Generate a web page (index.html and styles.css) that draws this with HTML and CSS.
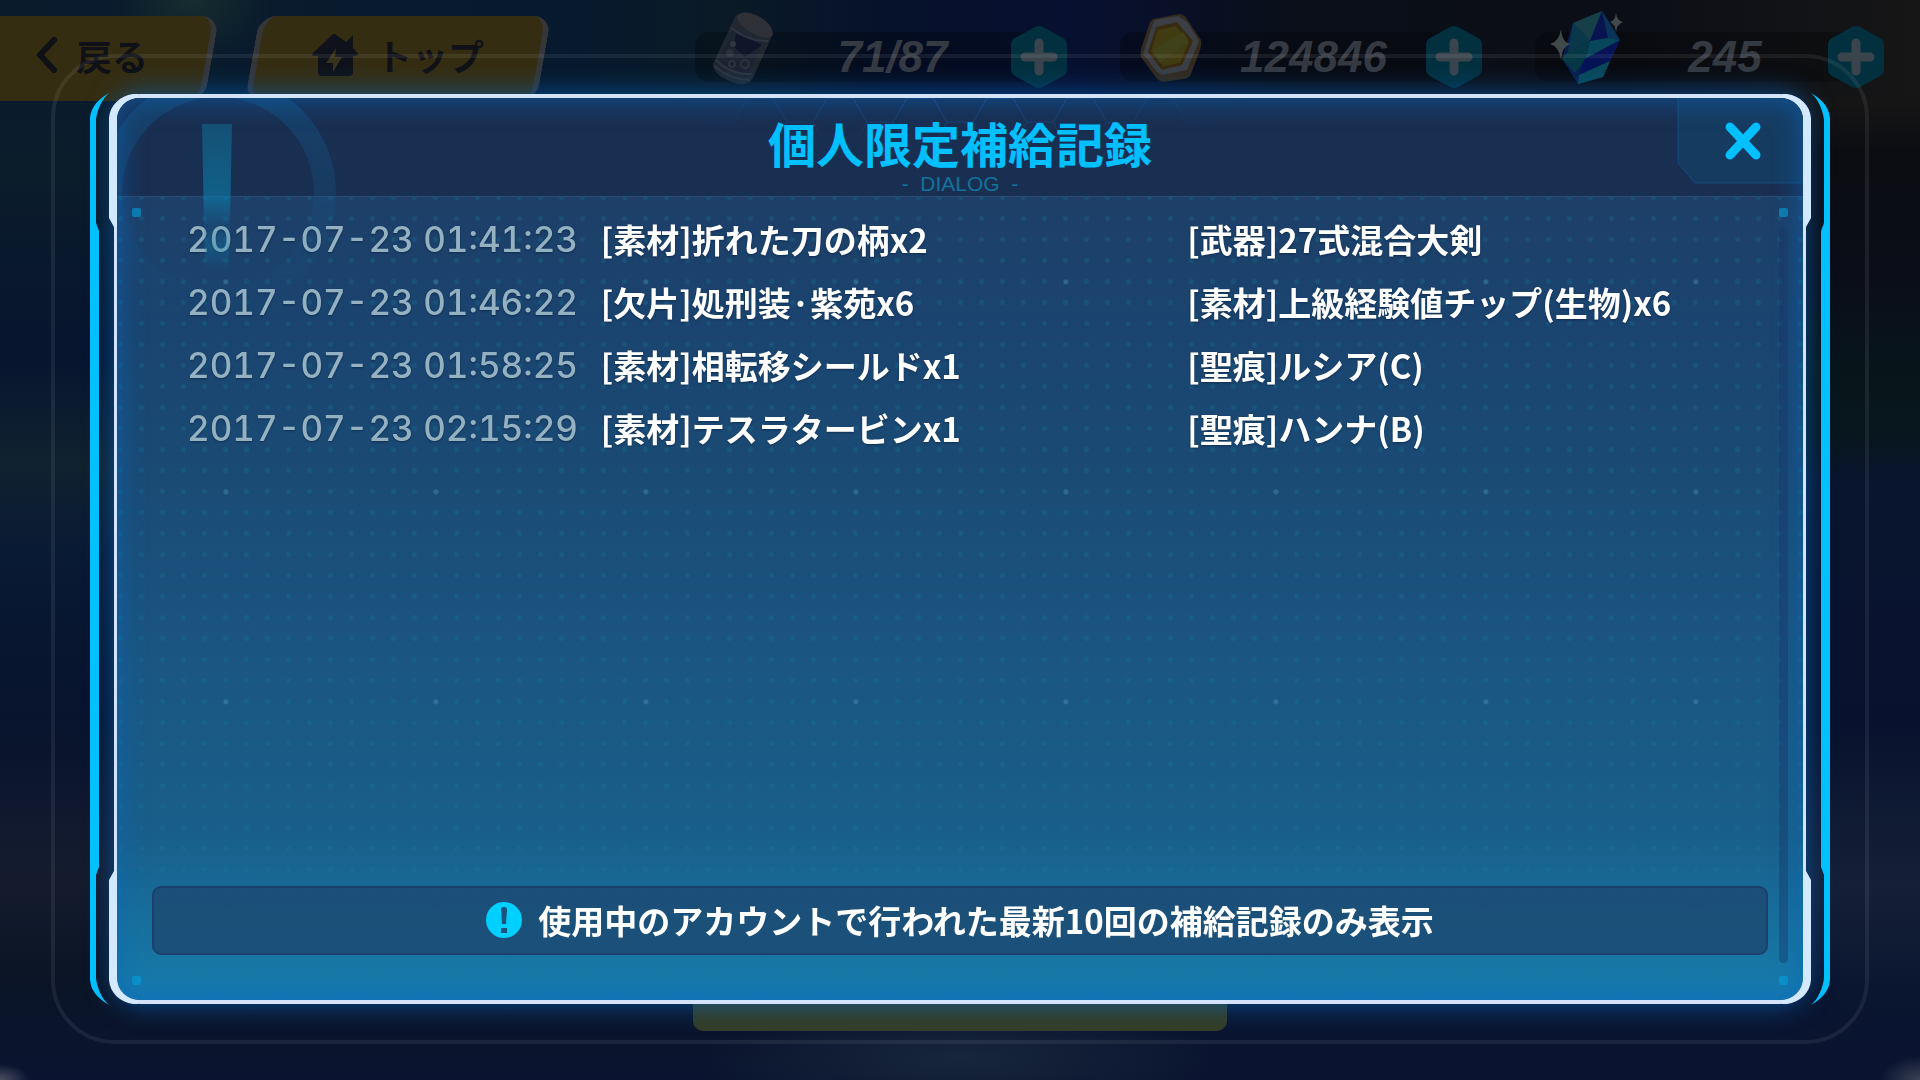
FILE: index.html
```html
<!DOCTYPE html>
<html lang="ja">
<head>
    <title>個人限定補給記録</title>
    <meta charset="UTF-8">
    <meta name="viewport" content="width=device-width, initial-scale=1.0">
    <link rel="stylesheet" href="styles.css">
</head>
<body>
    <!-- shared shapes -->
    <svg class="defs" width="0" height="0" aria-hidden="true">
        <symbol id="corner" viewBox="0 0 50 145">
            <path fill="#00c0ff" d="M19 3C9 9 1 16 0 28V145H9V141L6 133V30C7 20 12 9 19 3Z"/>
            <path fill="#d3e9ff" d="M48 4H43C30 6 20 15 19 28V128L24 137H27V34C28 20 35 11 48 8Z"/>
        </symbol>
        <symbol id="plus" viewBox="0 0 58 64">
            <path fill="#03303f" d="M25 2Q29 0 33 2L53 13Q57 15 57 20V44Q57 49 53 51L33 62Q29 64 25 62L5 51Q1 49 1 44V20Q1 15 5 13Z"/>
            <path stroke="#3a444d" stroke-width="9" stroke-linecap="round" d="M29 18V46M15 32H43"/>
        </symbol>
    </svg>

    <div class="lobby">
        <header class="topbar">
            <button class="nav-btn back">
                <svg width="22" height="36" viewBox="0 0 22 36" fill="none" stroke="#0f1116" stroke-width="6" stroke-linecap="round"><path d="M18 3L4 18L18 33"/></svg>
                戻る
            </button>
            <button class="nav-btn home">
                <svg width="46" height="42" viewBox="0 0 46 42">
                    <path fill="#0f121a" d="M23 0L34 8L41 1V14L46 20Q46 22 42 22H41V38Q41 42 37 42H9Q6 42 6 38V22H2Q-1 22 1 19L20 1Q23 -1 23 0Z"/>
                    <path fill="#38331b" d="M24 14L14 29H21L21 38L30 23H23Z"/>
                </svg>
                トップ
            </button>
            <div class="resources">
                <div class="resource stamina">
                    <svg class="can" width="66" height="76" viewBox="0 0 66 76">
                        <path fill="#262b35" d="M4 54L25 9Q29 0 44 4Q62 12 64 24L44 68Q38 78 23 72Q4 65 4 54Z"/>
                        <path fill="#36363b" d="M28 6Q34 -1 49 6Q63 13 64 24Q61 31 47 25Q29 17 28 6Z"/>
                        <path fill="#202737" d="M24 20L54 32L37 67L9 52Z"/>
                        <path fill="#12172d" d="M27 23L53 35L36 47L25 37Z"/>
                        <path fill="none" stroke="#343c48" stroke-width="2" d="M22 18Q38 31 59 31M7 50Q22 65 43 64M5 56Q22 70 41 70"/>
                        <g fill="none" stroke="#343844" stroke-width="2"><circle cx="23" cy="54" r="3"/><circle cx="36" cy="54" r="4"/></g>
                        <circle cx="24" cy="34" r="3" fill="#3a3e47"/><circle cx="21" cy="43" r="4" fill="#33373f"/>
                    </svg>
                    <span class="amount">71/87</span>
                    <button class="add" aria-label="+"><svg width="58" height="64"><use href="#plus"/></svg></button>
                </div>
                <div class="resource coins">
                    <svg class="coin" width="62" height="68" viewBox="0 0 62 68">
                        <path fill="#3b3020" d="M13 5L39 0Q44 0 47 5L61 26Q62 31 60 36L51 60Q49 65 43 65L23 68Q18 67 15 62L1 43Q0 39 1 35L9 11Q10 7 13 5Z"/>
                        <path fill="#45484b" d="M15 6L38 2L47 8L59 27L47 56L22 61L17 58L3 40L12 12Z"/>
                        <path fill="#41300f" d="M16 13L37 8L53 27L42 51L22 56L8 38Z"/>
                        <path fill="#4b440f" d="M18 16L36 12L49 28L40 49L23 52L11 37Z"/>
                        <path fill="#4a4b1b" d="M12 36L43 18L49 28L20 49Z"/>
                    </svg>
                    <span class="amount">124846</span>
                    <button class="add" aria-label="+"><svg width="58" height="64"><use href="#plus"/></svg></button>
                </div>
                <div class="resource crystals">
                    <svg class="gem" width="74" height="74" viewBox="0 0 74 74">
                        <path fill="#08245a" d="M24 12L53 0L71 29L54 66L29 73L13 48Z"/>
                        <path fill="#184851" d="M24 12L53 0L41 30Z"/>
                        <path fill="#0c3f55" d="M24 12L41 30L19 41Z"/>
                        <path fill="#09165a" d="M53 0L59 27L41 30Z"/>
                        <path fill="#083c63" d="M53 0L71 29L59 27Z"/>
                        <path fill="#075067" d="M41 30L59 27L71 29L36 48Z"/>
                        <path fill="#06404f" d="M19 41L41 30L36 48L26 62L13 48Z"/>
                        <path fill="#061563" d="M36 48L71 29L61 50L30 64Z"/>
                        <path fill="#0a5566" d="M30 64L61 50L54 66L29 73Z"/>
                        <path fill="#4a5555" d="M12 18Q13 32 22 33Q13 35 12 49Q10 35 1 33Q10 31 12 18ZM67 2Q68 10 74 11Q68 13 67 21Q66 13 61 11Q66 10 67 2Z"/>
                    </svg>
                    <span class="amount">245</span>
                    <button class="add" aria-label="+"><svg width="58" height="64"><use href="#plus"/></svg></button>
                </div>
            </div>
        </header>
        <div class="supply-btn"></div>
    </div>

    <div class="overlay">
        <div class="outline"></div>
        <section class="dialog" role="dialog" aria-labelledby="dialogTitle">
            <span class="rail rail-left"></span>
            <span class="rail rail-right"></span>
            <svg class="corner tl"><use href="#corner"/></svg>
            <svg class="corner tr"><use href="#corner"/></svg>
            <svg class="corner bl"><use href="#corner"/></svg>
            <svg class="corner br"><use href="#corner"/></svg>

            <div class="panel">
                <header class="dialog-head">
                    <svg class="hexes" width="640" height="96" viewBox="0 0 640 96" aria-hidden="true">
                        <defs>
                            <pattern id="hex" width="80" height="48" patternUnits="userSpaceOnUse">
                                <path fill="none" stroke="#1656a8" stroke-width="1" d="M0 24H13L27 0H53L67 24H80M13 24L27 48H53L67 24"/>
                            </pattern>
                            <radialGradient id="hexFade" cx="50%" cy="0%" r="50%">
                                <stop offset="0" stop-color="#fff" stop-opacity=".9"/>
                                <stop offset="1" stop-color="#fff" stop-opacity="0"/>
                            </radialGradient>
                            <mask id="hexMask"><rect width="640" height="96" fill="url(#hexFade)"/></mask>
                        </defs>
                        <rect width="640" height="96" fill="url(#hex)" mask="url(#hexMask)"/>
                    </svg>
                    <h1 id="dialogTitle">個人限定補給記録</h1>
                    <p>-&nbsp; DIALOG &nbsp;-</p>
                </header>

                <svg class="watermark" width="230" height="220" viewBox="0 0 230 220" aria-hidden="true">
                    <defs>
                        <linearGradient id="ringFade" x1="0" y1="0" x2="0" y2="220" gradientUnits="userSpaceOnUse">
                            <stop offset="0" stop-color="#127fc0" stop-opacity=".22"/>
                            <stop offset=".42" stop-color="#127fc0" stop-opacity=".15"/>
                            <stop offset=".5" stop-color="#127fc0" stop-opacity=".08"/>
                            <stop offset="1" stop-color="#127fc0" stop-opacity="0"/>
                        </linearGradient>
                        <linearGradient id="markFade" x1="0" y1="26" x2="0" y2="172" gradientUnits="userSpaceOnUse">
                            <stop offset="0" stop-color="#0f8fb8" stop-opacity=".35"/>
                            <stop offset=".5" stop-color="#0c80ae" stop-opacity=".6"/>
                            <stop offset=".7" stop-color="#0c80ae" stop-opacity=".1"/>
                            <stop offset=".84" stop-color="#0c80ae" stop-opacity=".35"/>
                            <stop offset="1" stop-color="#0c80ae" stop-opacity="0"/>
                        </linearGradient>
                    </defs>
                    <circle cx="101" cy="95" r="107" fill="none" stroke="url(#ringFade)" stroke-width="22"/>
                    <path fill="url(#markFade)" d="M85 26H115L112 172H88Z"/>
                </svg>

                <button class="close" aria-label="閉じる">
                    <svg width="126" height="86" viewBox="0 0 126 86">
                        <path fill="#0f5a86" fill-opacity=".3" stroke="#135a92" stroke-opacity=".6" d="M1 -2V65L18 85H130V-2Z"/>
                        <path stroke="#00c0ff" stroke-width="9" stroke-linecap="round" d="M53 29L79 57M79 29L53 57"/>
                    </svg>
                </button>

                <div class="records">
                    <table>
                        <colgroup><col class="col-date"><col class="col-first"><col></colgroup>
                        <tbody>
                            <tr>
                                <td class="date">2017-07-23 01:41:23</td>
                                <td>[素材]折れた刀の柄x2</td>
                                <td>[武器]27式混合大剣</td>
                            </tr>
                            <tr>
                                <td class="date">2017-07-23 01:46:22</td>
                                <td>[欠片]処刑装·紫苑x6</td>
                                <td>[素材]上級経験値チップ(生物)x6</td>
                            </tr>
                            <tr>
                                <td class="date">2017-07-23 01:58:25</td>
                                <td>[素材]相転移シールドx1</td>
                                <td>[聖痕]ルシア(C)</td>
                            </tr>
                            <tr>
                                <td class="date">2017-07-23 02:15:29</td>
                                <td>[素材]テスラタービンx1</td>
                                <td>[聖痕]ハンナ(B)</td>
                            </tr>
                        </tbody>
                    </table>
                    <span class="scroll-track"></span>
                    <i class="pin pin-tl"></i>
                    <i class="pin pin-tr"></i>
                    <i class="pin pin-bl"></i>
                    <i class="pin pin-br"></i>
                </div>

                <div class="notice">
                    <svg width="36" height="36" viewBox="0 0 36 36">
                        <circle cx="18" cy="18" r="18" fill="#00d0ff"/>
                        <path fill="#1b527d" d="M15 7Q15 5 18 5T21 7L20 22H16ZM15 26H21V31H15Z"/>
                    </svg>
                    <span>使用中のアカウントで行われた最新10回の補給記録のみ表示</span>
                </div>
            </div>
        </section>
    </div>
</body>
</html>
```
FILE: styles.css
```css
* {
    box-sizing: border-box;
}
body {
    margin: 0;
    min-height: 100vh;
    overflow: hidden;
    font-family: "Noto Sans CJK JP", "Noto Sans", sans-serif;
    color: #fff;
    background-color: #0a1330;
}
button {
    margin: 0;
    padding: 0;
    border: 0;
    background: none;
    font: inherit;
    cursor: pointer;
}
svg {
    display: block;
    flex: none;
}
.defs {
    position: absolute;
}

/* dimmed lobby behind the dialog */
.lobby {
    display: flex;
    flex-direction: column;
    justify-content: space-between;
    align-items: center;
    height: 100vh;
    padding: 16px 35px 49px 0;
    background:
        radial-gradient(ellipse 40px 24px at 100% 100%, #3a4254, transparent),
        radial-gradient(ellipse 30px 16px at 0% 100%, #4a5060, transparent),
        radial-gradient(ellipse 260px 60px at 50% 98%, #17263b, transparent),
        radial-gradient(ellipse 80px 60px at 10% 0%, #172d2f, transparent),
        linear-gradient(90deg, #0a1c2c, #07192d 30%, #0a1a26 38%, #06112b 46%, #071030 56%, #0b0f19 68%, #0b0e16 84%, #161616) top / 100% 9% no-repeat,
        linear-gradient(#0a1c2c 9%, #0b1c2b 16%, #07152f 33%, #10222f 43%, #091a34 51%, #08132d 67%, #141c2e 81%, #0b1526 90%, #0a1430) left / 50% 100% no-repeat,
        linear-gradient(#161616 9%, #0c0d12 14%, #0b0e19 26%, #07151b 34%, #08161d 40%, #09142f 45%, #08122e 67%, #152037 82%, #0a1530 92%, #0a1430) right / 50% 100% no-repeat;
}
.topbar {
    display: flex;
    align-self: stretch;
}
.nav-btn {
    position: relative;
    z-index: 0;
    display: flex;
    align-items: center;
    justify-content: center;
    height: 85px;
    padding-bottom: 8px;
    color: #0f1116;
    font-size: 36px;
    font-weight: 700;
    line-height: 40px;
}
.nav-btn::before {
    content: "";
    position: absolute;
    inset: 0;
    z-index: -1;
    background-color: #352d12;
    border: solid #35363a;
    border-width: 0 6px;
    border-radius: 18px;
    transform: skewX(-10deg);
}
.back {
    gap: 18px;
    width: 212px;
    margin-right: 40px;
    padding-right: 28px;
}
.back::before {
    left: -40px;
}
.home {
    gap: 18px;
    width: 292px;
}
.resources {
    display: flex;
    gap: 52px;
    margin-left: auto;
    height: 82px;
}
.resource {
    position: relative;
    z-index: 0;
    display: flex;
    align-items: center;
}
.resource::before {
    content: "";
    position: absolute;
    inset: 16px 28px 16px 0;
    z-index: -1;
    border-radius: 14px 0 0 14px;
    background-color: rgba(0, 0, 0, 0.25);
}
.stamina {
    width: 373px;
}
.coins {
    width: 363px;
}
.crystals {
    width: 350px;
}
.can,
.coin,
.gem {
    margin: 0 0 18px 14px;
    opacity: 0.85;
}
.coin {
    margin-left: 20px;
}
.amount {
    flex: 1;
    text-align: center;
    color: #353a42;
    font-family: "Liberation Sans", Arial, sans-serif;
    font-size: 44px;
    font-weight: 700;
    font-style: italic;
    line-height: 50px;
}
.supply-btn {
    width: 534px;
    height: 80px;
    margin-left: 35px;
    border-radius: 10px;
    background-color: #353d26;
}

/* dialog frame */
.overlay {
    position: fixed;
    inset: 0;
    padding: 94px 114px 76px;
}
.outline {
    position: absolute;
    inset: 54px 51px 36px;
    border: 4px solid rgba(255, 255, 255, 0.07);
    border-radius: 64px;
}
.dialog {
    position: relative;
    height: 100%;
    border: solid #d3e3fb;
    border-width: 4px 3px;
    border-radius: 26px;
    box-shadow: 0 0 26px 2px rgba(8, 98, 184, 0.65);
}
.corner {
    position: absolute;
    width: 50px;
    height: 145px;
}
.tl {
    top: -8px;
    left: -27px;
}
.tr {
    top: -8px;
    right: -27px;
    transform: scaleX(-1);
}
.bl {
    bottom: -8px;
    left: -27px;
    transform: scaleY(-1);
}
.br {
    bottom: -8px;
    right: -27px;
    transform: scale(-1);
}
.rail {
    position: absolute;
    top: 134px;
    bottom: 134px;
    width: 9px;
    background-color: #00c0ff;
}
.rail-left {
    left: -27px;
}
.rail-right {
    right: -27px;
}
.panel {
    position: relative;
    display: flex;
    flex-direction: column;
    height: 100%;
    padding-bottom: 45px;
    border-radius: 22px;
    overflow: hidden;
    background:
        radial-gradient(circle, rgba(110, 160, 190, 0.25) 2px, transparent 3px) 4px 79px / 210px 210px,
        radial-gradient(circle, rgba(20, 125, 155, 0.25) 2px, transparent 3px) 14px 5px / 21px 21px,
        linear-gradient(#1d3f68 99px, #1a446f 220px, #1a4b75 380px, #1a5883 600px, #195f8b 740px, #186b98 800px, #1778a6 875px, #167ab0);
}
.panel::after {
    content: "";
    position: absolute;
    inset: 0;
    border-radius: 22px;
    box-shadow: inset 0 0 26px 3px rgba(10, 104, 190, 0.55);
    pointer-events: none;
}
.dialog-head {
    position: relative;
    display: flex;
    flex-direction: column;
    align-items: center;
    height: 99px;
    padding-top: 18px;
    background-color: #192f51;
    border-bottom: 1px solid #2b4a75;
}
.hexes {
    position: absolute;
    top: 0;
    left: 50%;
    margin-left: -320px;
}
.dialog-head h1 {
    position: relative;
    margin: 0;
    color: #00c0ff;
    font-size: 48px;
    font-weight: 700;
    line-height: 52px;
}
.dialog-head p {
    margin: 4px 0 0;
    color: #12729c;
    font-family: "Liberation Sans", Arial, sans-serif;
    font-size: 21px;
    line-height: 24px;
}
.watermark {
    position: absolute;
    top: 0;
    left: 0;
}
.close {
    position: absolute;
    top: 0;
    right: 0;
}

/* supply records */
.records {
    flex: 1;
    padding: 10px 0 0 70px;
}
.records table {
    width: 100%;
    table-layout: fixed;
    border-collapse: collapse;
}
.col-date {
    width: 25.6%;
}
.col-first {
    width: 36.3%;
}
.records td {
    height: 63px;
    padding: 0;
    font-size: 33px;
    font-weight: 700;
    line-height: 40px;
    white-space: nowrap;
    text-shadow: 0 1px 2px rgba(10, 30, 60, 0.6);
}
.records .date {
    color: #94b1c2;
    font-family: Inter, "Noto Sans", sans-serif;
    font-size: 35px;
    font-weight: 500;
    font-variant-numeric: tabular-nums;
}
.scroll-track {
    position: absolute;
    top: 130px;
    right: 15px;
    bottom: 37px;
    width: 9px;
    border-radius: 5px;
    background-color: rgba(24, 50, 100, 0.4);
}
.pin {
    position: absolute;
    width: 9px;
    height: 9px;
    border-radius: 2px;
    background-color: #0e7cae;
}
.pin-tl,
.pin-tr {
    top: 110px;
}
.pin-bl,
.pin-br {
    bottom: 15px;
    background-color: #0b95cc;
}
.pin-tl,
.pin-bl {
    left: 15px;
}
.pin-tr,
.pin-br {
    right: 15px;
}
.notice {
    display: flex;
    align-items: center;
    justify-content: center;
    gap: 16px;
    height: 69px;
    margin: 0 35px;
    padding-bottom: 2px;
    border: 2px solid #1c3f6b;
    border-radius: 9px;
    background-color: rgba(28, 76, 118, 0.9);
    font-size: 33px;
    font-weight: 700;
    line-height: 40px;
}
```
